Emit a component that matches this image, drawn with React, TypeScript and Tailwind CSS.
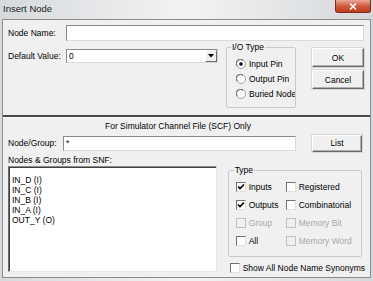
const Radio = ({ checked = false }: { checked?: boolean }) => (
  <svg width="10" height="10" viewBox="0 0 10 10" className="shrink-0">
    <circle cx="5" cy="5" r="4.5" fill="#fff" stroke="#a0a0a0" />
    <path d="M1.3 7 A4 4 0 0 1 7 1.3" fill="none" stroke="#606060" strokeWidth="1" />
    {checked && <circle cx="5" cy="5" r="1.8" fill="#000" />}
  </svg>
);

const Check = ({ checked = false, disabled = false }: { checked?: boolean; disabled?: boolean }) => (
  <span
    className={`w-[10px] h-[10px] shrink-0 flex items-center justify-center border ${
      disabled
        ? "bg-[#f0f0f0] border-[#c0c0c0]"
        : "bg-white border-t-[#707070] border-l-[#707070] border-r-[#e0e0e0] border-b-[#e0e0e0]"
    }`}
  >
    {checked && (
      <svg width="8" height="8" viewBox="0 0 8 8">
        <path d="M1 3.5 L3 5.5 L7 1.5" fill="none" stroke="#000" strokeWidth="1.6" />
      </svg>
    )}
  </span>
);

const Button = ({ label, className }: { label: string; className: string }) => (
  <div
    className={`flex items-center justify-center border border-t-white border-l-white border-r-[#696969] border-b-[#696969] shadow-[inset_-1px_-1px_0_#b0b0b0,0_0_0_1px_#d8d8d8] bg-[#f0f0f0] ${className}`}
  >
    {label}
  </div>
);

const field = "bg-white border border-t-[#8a8a8a] border-l-[#8a8a8a] border-r-[#dadada] border-b-[#dadada]";

const CheckRow = ({ label, checked, disabled }: { label: string; checked?: boolean; disabled?: boolean }) => (
  <div className={`flex items-center gap-[3px] whitespace-nowrap ${disabled ? "text-[#a8a8a8]" : ""}`}>
    <Check checked={checked} disabled={disabled} />
    <span>{label}</span>
  </div>
);

export default function App() {
  return (
    <div className="w-[373px] h-[281px] overflow-hidden flex flex-col bg-gradient-to-r from-[#d7dadd] via-[#f2f3f4] to-[#d5d8db] text-[8.5px] leading-[10px] text-black [font-family:'Liberation_Sans',Arial,sans-serif]">
      {/* title bar */}
      <div className="h-[19px] flex items-start shrink-0">
        <span className="pl-[3px] pt-[3px] text-[9.5px] leading-[11px] text-[#1a1a1a]">Insert Node</span>
        <div className="ml-auto mr-[2px] w-[36px] h-[13px] rounded-b-[3px] border border-t-0 border-[#7b2b1d] bg-gradient-to-b from-[#e9a794] via-[#d05a3f] to-[#c0391e] flex items-center justify-center">
          <svg width="8" height="7" viewBox="0 0 8 7">
            <path d="M1 0.5 L7 6.5 M7 0.5 L1 6.5" stroke="#fff" strokeWidth="1.6" />
          </svg>
        </div>
      </div>

      {/* dialog body */}
      <div className="mx-[2px] h-[259px] border border-[#8c8c8c] bg-[#f0f0f0] flex flex-col">
        <div className="flex flex-col px-[5px] pt-[5px]">
          <div className="flex items-center h-[16px]">
            <span className="w-[58px]">Node Name:</span>
            <div className={`w-[298px] h-[16px] ${field}`} />
          </div>

          <div className="flex items-start mt-[1px]">
            <div className="flex items-center mt-[7px] h-[14px]">
              <span className="w-[58px]">Default Value:</span>
              <div className={`w-[152px] h-[14px] flex items-center ${field}`}>
                <span className="pl-[2px] flex-1">0</span>
                <div className="w-[12px] h-[12px] flex items-center justify-center border border-t-white border-l-white border-r-[#696969] border-b-[#696969] bg-[#f0f0f0]">
                  <svg width="6" height="4" viewBox="0 0 6 4">
                    <path d="M0 0 H6 L3 3.5 Z" fill="#000" />
                  </svg>
                </div>
              </div>
            </div>

            <fieldset className="ml-[8px] w-[70px] h-[66px] border border-[#c9c9c9] rounded-[2px] m-0 p-0 min-w-0">
              <legend className="ml-[4px] px-[1px]">I/O Type</legend>
              <div className="flex flex-col pl-[9px] pt-[4px]">
                <div className="flex items-center gap-[3px] h-[15px]">
                  <Radio checked />
                  <span>Input Pin</span>
                </div>
                <div className="flex items-center gap-[3px] h-[15px]">
                  <Radio />
                  <span>Output Pin</span>
                </div>
                <div className="flex items-center gap-[3px] h-[15px] whitespace-nowrap overflow-hidden">
                  <Radio />
                  <span>Buried Node</span>
                </div>
              </div>
            </fieldset>

            <div className="ml-[16px] mt-[6px] flex flex-col gap-[3px]">
              <Button label="OK" className="w-[52px] h-[19px]" />
              <Button label="Cancel" className="w-[52px] h-[19px]" />
            </div>
          </div>
        </div>

        <div className="mt-[7px] h-[3px] border-t-2 border-[#4a4a4a] border-b border-b-[#fdfdfd]" />

        <div className="flex flex-col px-[5px]">
          <div className="mt-[3px] pl-[97px]">For Simulator Channel File (SCF) Only</div>

          <div className="flex items-center mt-[4px] h-[16px]">
            <span className="w-[55px]">Node/Group:</span>
            <div className={`w-[233px] h-[15px] pl-[2px] pt-[1px] ${field}`}>*</div>
            <Button label="List" className="ml-[16px] w-[50px] h-[17px]" />
          </div>

          <div className="mt-[4px]">Nodes &amp; Groups from SNF:</div>

          <div className="flex items-start">
            <div className="mt-[1px] w-[210px] h-[106px] bg-white border border-t-[#8a8a8a] border-l-[#6a6a6a] border-r-[#e6e6e6] border-b-[#e6e6e6] shadow-[inset_1px_1px_0_#404040] pl-[3px] pt-[8px] flex flex-col leading-[10px]">
              <span>IN_D (I)</span>
              <span>IN_C (I)</span>
              <span>IN_B (I)</span>
              <span>IN_A (I)</span>
              <span>OUT_Y (O)</span>
            </div>

            <div className="ml-[11px] flex flex-col">
              <fieldset className="w-[134px] h-[92px] border border-[#c9c9c9] rounded-[2px] m-0 p-0 min-w-0">
                <legend className="ml-[5px] px-[1px]">Type</legend>
                <div className="grid grid-cols-[50px_1fr] auto-rows-[18px] items-center pl-[7px] pt-[3px]">
                  <CheckRow label="Inputs" checked />
                  <CheckRow label="Registered" />
                  <CheckRow label="Outputs" checked />
                  <CheckRow label="Combinatorial" />
                  <CheckRow label="Group" disabled />
                  <CheckRow label="Memory Bit" disabled />
                  <CheckRow label="All" />
                  <CheckRow label="Memory Word" disabled />
                </div>
              </fieldset>
              <div className="mt-[6px] ml-[2px] flex items-center gap-[3px] whitespace-nowrap">
                <Check />
                <span>Show All Node Name Synonyms</span>
              </div>
            </div>
          </div>
        </div>
      </div>
    </div>
  );
}
